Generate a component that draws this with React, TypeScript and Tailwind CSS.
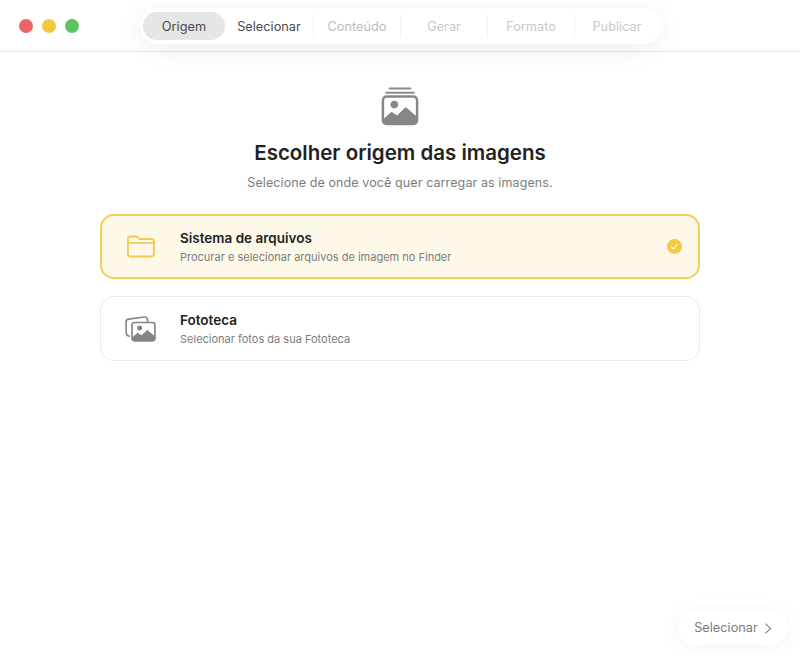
import React from "react";

const STEPS = [
  { label: "Origem", width: "w-[82px]", state: "active" },
  { label: "Selecionar", width: "w-[88px]", state: "next" },
  { label: "Conteúdo", width: "w-[86px]", state: "soft" },
  { label: "Gerar", width: "w-[86px]", state: "faint" },
  { label: "Formato", width: "w-[86px]", state: "faint" },
  { label: "Publicar", width: "w-[84px]", state: "faint" },
];

function HeroIcon() {
  return (
    <svg width="38" height="41" viewBox="0 0 40 42" fill="none">
      <rect x="8" y="1" width="24" height="2.2" rx="1.1" fill="#8a8a8a" />
      <rect x="4.5" y="5.5" width="31" height="2.2" rx="1.1" fill="#8a8a8a" />
      <rect x="2" y="10.5" width="36" height="29" rx="4" stroke="#868686" strokeWidth="2.6" />
      <circle cx="14" cy="19" r="4" fill="#868686" />
      <path d="M3 34 L11 26.5 L17 30.5 L26 21.5 L37 31 V36 Q37 39 34 39 H6 Q3 39 3 36 Z" fill="#868686" />
    </svg>
  );
}

function FolderIcon() {
  return (
    <svg width="28" height="23" viewBox="0 0 28 23" fill="none" stroke="#f2cb55" strokeWidth="1.8">
      <path d="M1 4 Q1 1.5 3.5 1.5 H9 Q10.2 1.5 11 2.4 L12.5 4 H24.5 Q27 4 27 6.5 V19 Q27 21.5 24.5 21.5 H3.5 Q1 21.5 1 19 Z" strokeLinejoin="round" />
      <path d="M1 8 H27" />
    </svg>
  );
}

function PhotosIcon() {
  return (
    <svg width="31" height="26" viewBox="0 0 32 27" fill="none">
      <path d="M5 21 L3.6 20.7 Q1.4 20.2 1.2 18 L1 6 Q1 3.6 3.4 3.2 L20 1 Q22.6 0.8 23 3 L23.6 6" stroke="#858585" strokeWidth="1.7" strokeLinejoin="round" />
      <rect x="7.2" y="6.8" width="23.8" height="19" rx="2.6" stroke="#858585" strokeWidth="1.7" />
      <circle cx="15" cy="12.5" r="2.6" fill="#858585" />
      <path d="M7.5 22 L13 17.5 L17 20 L23 14.5 L31 21 V23.5 Q31 26 28.5 26 H10 Q7.5 26 7.5 23.5 Z" fill="#858585" />
    </svg>
  );
}

function Card({ icon, title, text, selected }: { icon: React.ReactNode; title: string; text: string; selected?: boolean }) {
  return (
    <div
      className={
        selected
          ? "flex h-[65px] items-center rounded-[14px] border-2 border-[#f2cf60] bg-[#fdf8e7]"
          : "flex h-[65px] items-center rounded-[14px] border border-[#ebebeb] bg-white"
      }
    >
      <div className={selected ? "flex w-[78px] justify-center pr-[1px]" : "flex w-[79px] justify-center"}>{icon}</div>
      <div className="flex-1">
        <div className="text-[13.5px] leading-[18px] font-semibold text-[#222222]">{title}</div>
        <div className="mt-[2px] text-[11px] leading-[16px] text-[#7c7c7c]">{text}</div>
      </div>
      {selected && (
        <div className="mr-[16px] flex h-[15px] w-[15px] items-center justify-center rounded-full bg-[#f4c945]">
          <svg width="9" height="9" viewBox="0 0 9 9" fill="none" stroke="#fff" strokeWidth="1.1">
            <path d="M1.5 4.8 L3.6 7 L7.6 2" />
          </svg>
        </div>
      )}
    </div>
  );
}

export default function App() {
  return (
    <div className="flex h-[652px] w-[800px] flex-col overflow-hidden bg-white font-['Inter',sans-serif]">
      <header className="flex h-[52px] shrink-0 border-b border-[#e4e4e4] bg-white">
        <div className="flex w-[140px] items-center gap-[9px] pl-[19px]">
          <span className="h-[14px] w-[14px] rounded-full bg-[#ec6464]" />
          <span className="h-[14px] w-[14px] rounded-full bg-[#f2c841]" />
          <span className="h-[14px] w-[14px] rounded-full bg-[#5ec260]" />
        </div>
        <nav className="relative z-10 mt-[8px] flex h-[36px] w-[521px] items-center rounded-[18px] bg-white pl-[3px] shadow-[0_4px_24px_rgba(0,0,0,0.07)]">
          {STEPS.map((s, i) => (
            <React.Fragment key={s.label}>
              <div
                className={
                  s.width +
                  " flex h-[28px] items-center justify-center pt-[1px] text-[12.75px] " +
                  (s.state === "active"
                    ? "rounded-[14px] bg-[#e6e6e6] text-[#4a4a4a]"
                    : s.state === "next"
                      ? "text-[#4a4a4a]"
                      : s.state === "soft"
                        ? "text-[#bcbcbc]"
                        : "text-[#c9c9c9]")
                }
              >
                {s.label}
              </div>
              {i > 0 && i < STEPS.length - 1 && <div className="h-[22px] w-[1px] shrink-0 bg-[#f2f2f2]" />}
            </React.Fragment>
          ))}
        </nav>
      </header>

      <main className="flex flex-1 flex-col items-center pt-[34px]">
        <HeroIcon />
        <h1 className="mt-[11px] text-[20.5px] leading-[30px] font-semibold text-[#222222]">Escolher origem das imagens</h1>
        <p className="mt-[5px] text-[12.5px] leading-[20px] tracking-[0.1px] text-[#7c7c7c]">
          Selecione de onde você quer carregar as imagens.
        </p>
        <div className="mt-[21px] flex w-[600px] flex-col gap-[17px]">
          <Card selected icon={<FolderIcon />} title="Sistema de arquivos" text="Procurar e selecionar arquivos de imagem no Finder" />
          <Card icon={<PhotosIcon />} title="Fototeca" text="Selecionar fotos da sua Fototeca" />
        </div>
      </main>

      <footer className="flex h-[42px] shrink-0 justify-end pr-[12px]">
        <div className="flex h-[35px] w-[110px] items-center justify-center gap-[6px] rounded-[18px] bg-white pt-[1px] text-[12.75px] text-[#7c7c7c] shadow-[0_2px_20px_rgba(0,0,0,0.05)]">
          Selecionar
          <svg width="8" height="13" viewBox="0 0 9 13" fill="none" stroke="#7c7c7c" strokeWidth="1.2">
            <path d="M1.5 1 L7.5 6.5 L1.5 12" />
          </svg>
        </div>
      </footer>
    </div>
  );
}
